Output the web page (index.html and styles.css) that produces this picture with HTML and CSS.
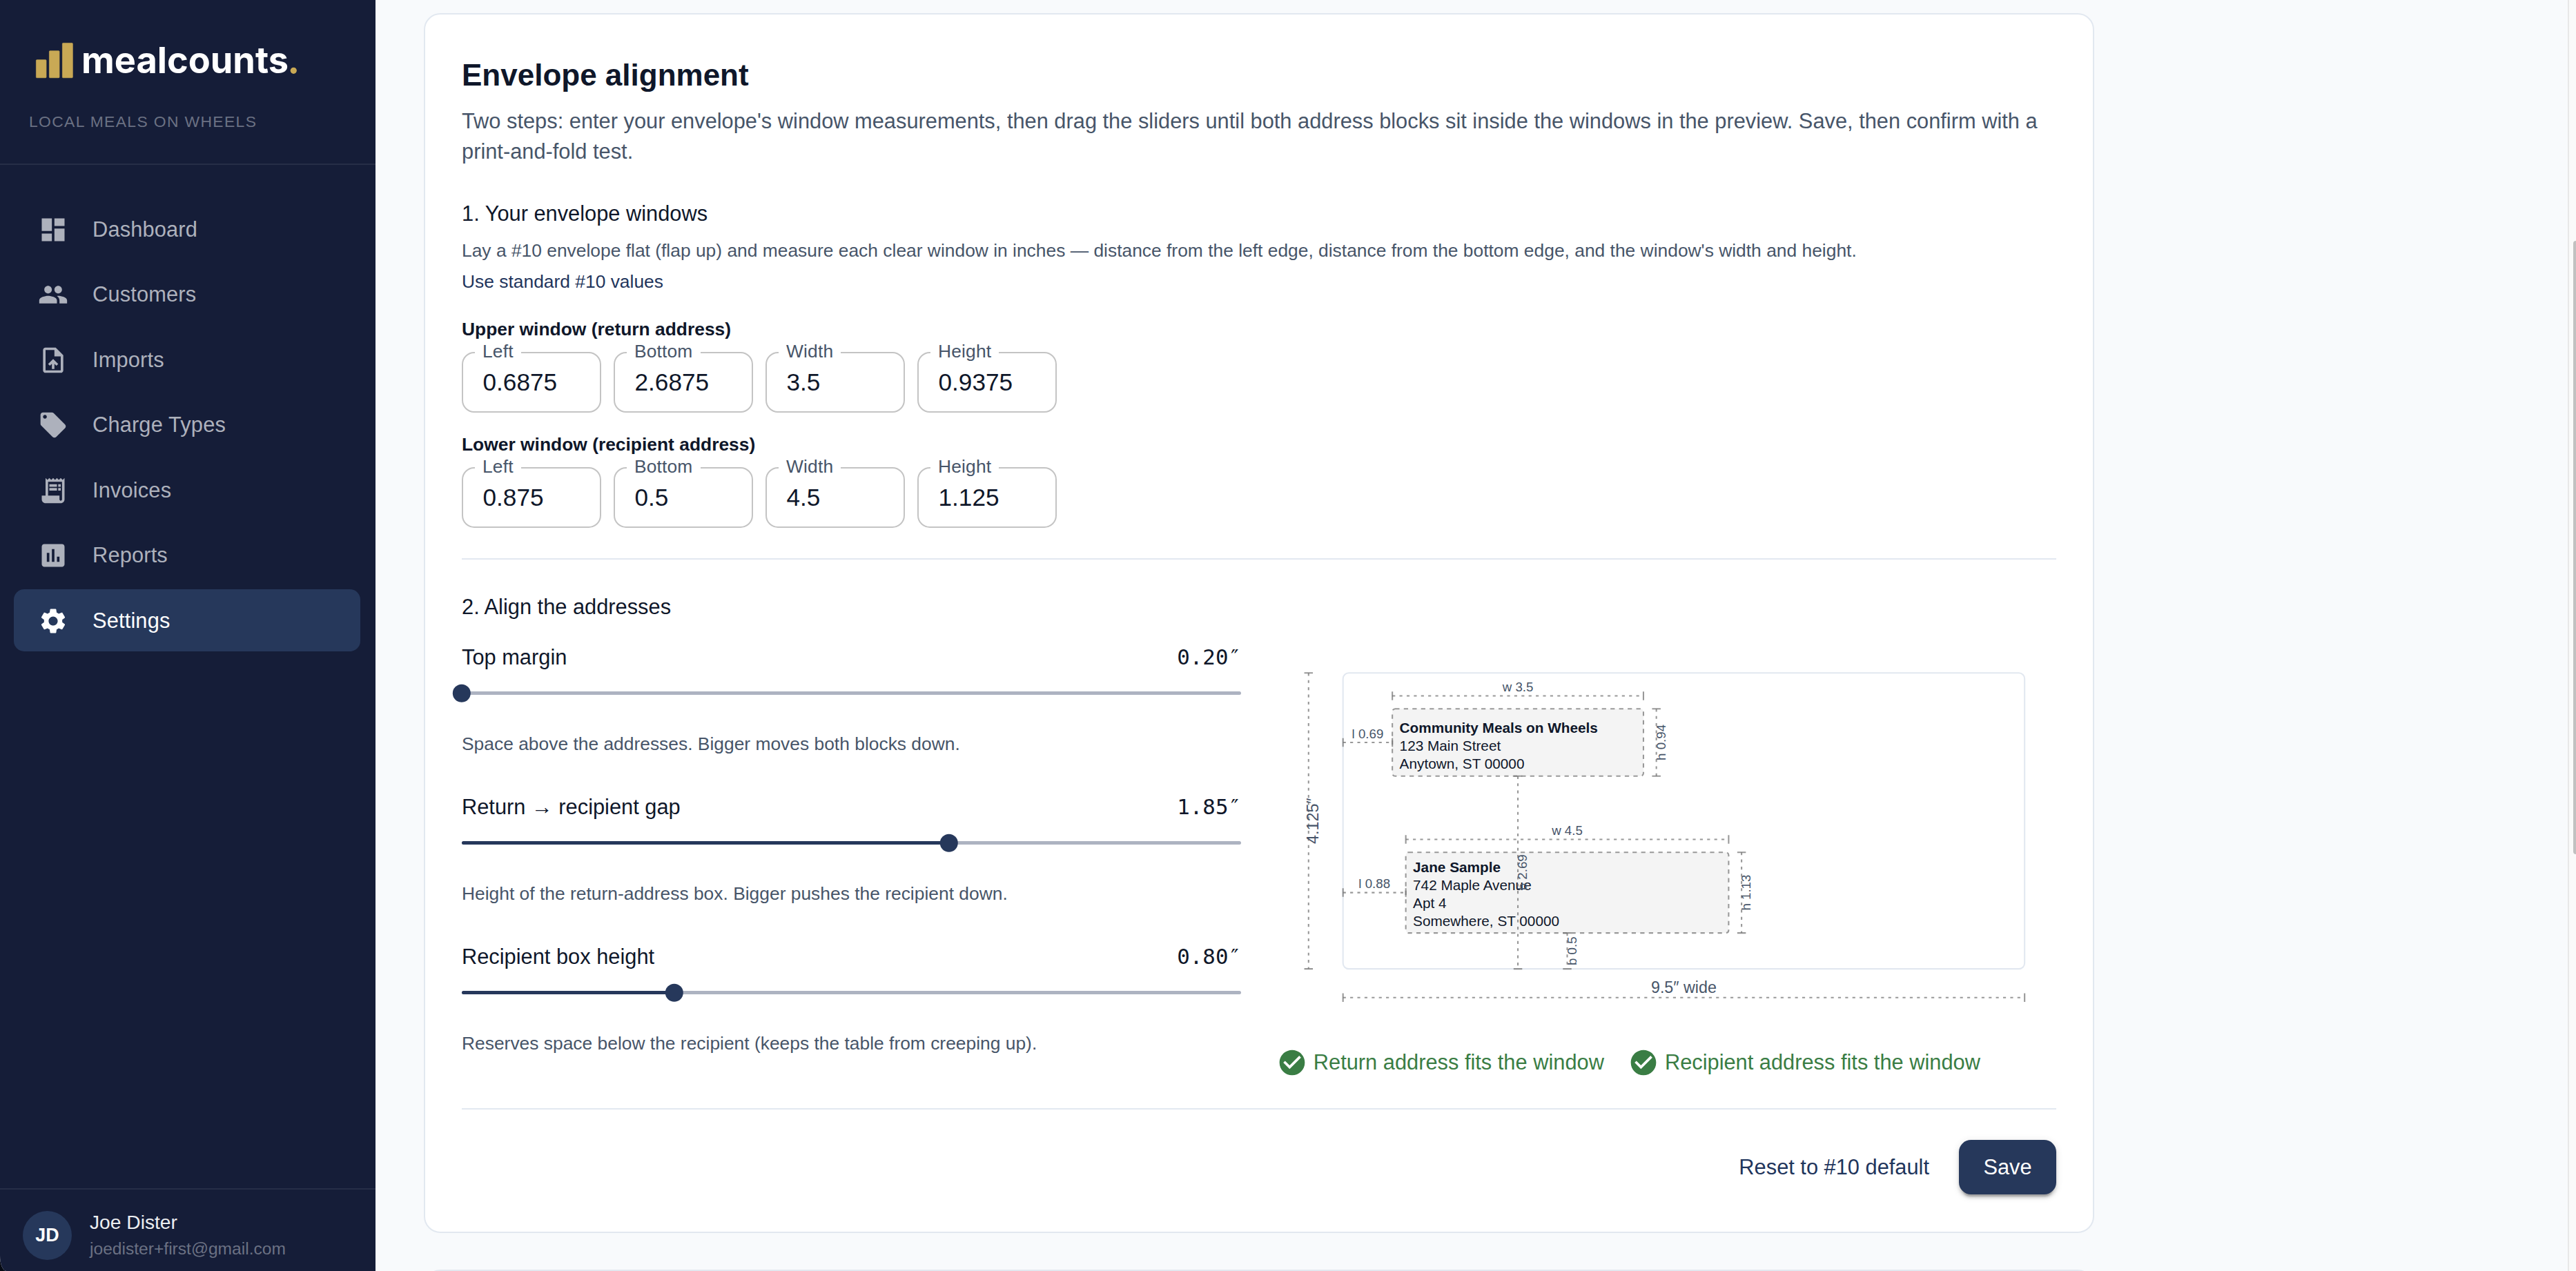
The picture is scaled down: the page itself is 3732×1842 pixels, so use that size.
FILE: index.html
```
<!DOCTYPE html>
<html lang="en">
  <head>
    <meta charset="UTF-8" />
    <meta name="viewport" content="width=device-width, initial-scale=1.0" />
    <title>mealcounts - Settings</title>
    <link rel="stylesheet" href="styles.css">
  </head>

  <body>
    <div class="app">
      <aside class="sidebar">
        <div class="brand">
          <svg class="logo" width="400" height="88" viewBox="0 0 400 88">
            <g class="logo-bars">
              <rect x="10.4" y="42.7" width="14.6" height="26" rx="1" />
              <rect x="29.4" y="29.7" width="14.6" height="39" rx="1" />
              <rect x="48.4" y="18.4" width="14.9" height="50.3" rx="1" />
            </g>
            <text class="logo-text" x="76" y="62.3">mealcounts</text>
            <circle class="logo-dot" cx="383.3" cy="58.3" r="4.6" />
          </svg>
          <p class="org">LOCAL MEALS ON WHEELS</p>
        </div>

        <nav class="nav">
          <a class="nav-item">
            <svg class="icon" viewBox="0 0 24 24"><path d="M3 13h8V3H3v10zm0 8h8v-6H3v6zm10 0h8V11h-8v10zm0-18v6h8V3h-8z" /></svg>
            Dashboard
          </a>
          <a class="nav-item">
            <svg class="icon" viewBox="0 0 24 24"><path d="M16 11c1.66 0 2.99-1.34 2.99-3S17.66 5 16 5c-1.66 0-3 1.34-3 3s1.34 3 3 3zm-8 0c1.66 0 2.99-1.34 2.99-3S9.66 5 8 5C6.34 5 5 6.34 5 8s1.34 3 3 3zm0 2c-2.33 0-7 1.17-7 3.5V19h14v-2.5c0-2.33-4.67-3.5-7-3.5zm8 0c-.29 0-.62.02-.97.05 1.16.84 1.97 1.97 1.97 3.45V19h6v-2.5c0-2.33-4.67-3.5-7-3.5z" /></svg>
            Customers
          </a>
          <a class="nav-item">
            <svg class="icon" viewBox="0 0 24 24"><path d="M14 2H6c-1.1 0-1.99.9-1.99 2L4 20c0 1.1.89 2 1.99 2H18c1.1 0 2-.9 2-2V8l-6-6zm4 18H6V4h7v5h5v11zM8 15.01l1.41 1.41L11 14.84V19h2v-4.16l1.59 1.59L16 15.01 12.01 11z" /></svg>
            Imports
          </a>
          <a class="nav-item">
            <svg class="icon" viewBox="0 0 24 24"><path d="M21.41 11.58l-9-9C12.05 2.22 11.55 2 11 2H4c-1.1 0-2 .9-2 2v7c0 .55.22 1.05.59 1.42l9 9c.36.36.86.58 1.41.58.55 0 1.05-.22 1.41-.59l7-7c.37-.36.59-.86.59-1.41 0-.55-.23-1.06-.59-1.42zM5.5 7C4.67 7 4 6.33 4 5.5S4.67 4 5.5 4 7 4.67 7 5.5 6.33 7 5.5 7z" /></svg>
            Charge Types
          </a>
          <a class="nav-item">
            <svg class="icon" viewBox="0 0 24 24"><path d="M19.5 3.5L18 2l-1.5 1.5L15 2l-1.5 1.5L12 2l-1.5 1.5L9 2 7.5 3.5 6 2v14H3v3c0 1.66 1.34 3 3 3h12c1.66 0 3-1.34 3-3V2l-1.5 1.5zM19 19c0 .55-.45 1-1 1s-1-.45-1-1v-3H8V5h11v14z" /><path d="M9 7h6v2H9zm7 0h2v2h-2zm-7 3h6v2H9zm7 0h2v2h-2z" /></svg>
            Invoices
          </a>
          <a class="nav-item">
            <svg class="icon" viewBox="0 0 24 24"><path d="M19 3H5c-1.1 0-2 .9-2 2v14c0 1.1.9 2 2 2h14c1.1 0 2-.9 2-2V5c0-1.1-.9-2-2-2zM9 17H7v-7h2v7zm4 0h-2V7h2v10zm4 0h-2v-4h2v4z" /></svg>
            Reports
          </a>
          <a class="nav-item active">
            <svg class="icon" viewBox="0 0 24 24"><path d="M19.14 12.94c.04-.3.06-.61.06-.94 0-.32-.02-.64-.07-.94l2.03-1.58c.18-.14.23-.41.12-.61l-1.92-3.32c-.12-.22-.37-.29-.59-.22l-2.39.96c-.5-.38-1.03-.7-1.62-.94l-.36-2.54c-.04-.24-.24-.41-.48-.41h-3.84c-.24 0-.43.17-.47.41l-.36 2.54c-.59.24-1.13.57-1.62.94l-2.39-.96c-.22-.08-.47 0-.59.22L2.74 8.87c-.12.21-.08.47.12.61l2.03 1.58c-.05.3-.09.63-.09.94s.02.64.07.94l-2.03 1.58c-.18.14-.23.41-.12.61l1.92 3.32c.12.22.37.29.59.22l2.39-.96c.5.38 1.03.7 1.62.94l.36 2.54c.05.24.24.41.48.41h3.84c.24 0 .44-.17.47-.41l.36-2.54c.59-.24 1.13-.56 1.62-.94l2.39.96c.22.08.47 0 .59-.22l1.92-3.32c.12-.22.07-.47-.12-.61l-2.01-1.58zM12 15.6c-1.98 0-3.6-1.62-3.6-3.6s1.62-3.6 3.6-3.6 3.6 1.62 3.6 3.6-1.62 3.6-3.6 3.6z" /></svg>
            Settings
          </a>
        </nav>

        <div class="user">
          <div class="avatar">JD</div>
          <div>
            <p class="user-name">Joe Dister</p>
            <p class="user-email">joedister+first@gmail.com</p>
          </div>
        </div>
      </aside>

      <main class="main">
        <section class="card">
          <h2 class="title">Envelope alignment</h2>
          <p class="lead">Two steps: enter your envelope's window measurements, then drag the sliders until both address blocks sit inside the windows in the preview. Save, then confirm with a print-and-fold test.</p>

          <h3 class="step">1. Your envelope windows</h3>
          <p class="hint step-hint">Lay a #10 envelope flat (flap up) and measure each clear window in inches — distance from the left edge, distance from the bottom edge, and the window's width and height.</p>
          <a class="hint link">Use standard #10 values</a>

          <h4 class="group">Upper window (return address)</h4>
          <div class="fields">
            <div class="field"><label>Left</label>0.6875</div>
            <div class="field"><label>Bottom</label>2.6875</div>
            <div class="field"><label>Width</label>3.5</div>
            <div class="field"><label>Height</label>0.9375</div>
          </div>
          <h4 class="group">Lower window (recipient address)</h4>
          <div class="fields">
            <div class="field"><label>Left</label>0.875</div>
            <div class="field"><label>Bottom</label>0.5</div>
            <div class="field"><label>Width</label>4.5</div>
            <div class="field"><label>Height</label>1.125</div>
          </div>

          <hr class="divider">

          <h3 class="step align-step">2. Align the addresses</h3>
          <div class="align">
            <div class="sliders">
              <div>
                <div class="slider-head"><span>Top margin</span><span class="value">0.20″</span></div>
                <div class="slider"><div class="slider-fill" style="width: 0%"></div><div class="thumb" style="left: 0%"></div></div>
                <p class="hint">Space above the addresses. Bigger moves both blocks down.</p>
              </div>
              <div>
                <div class="slider-head"><span>Return → recipient gap</span><span class="value">1.85″</span></div>
                <div class="slider"><div class="slider-fill" style="width: 62.5%"></div><div class="thumb" style="left: 62.5%"></div></div>
                <p class="hint">Height of the return-address box. Bigger pushes the recipient down.</p>
              </div>
              <div>
                <div class="slider-head"><span>Recipient box height</span><span class="value">0.80″</span></div>
                <div class="slider"><div class="slider-fill" style="width: 27.27%"></div><div class="thumb" style="left: 27.27%"></div></div>
                <p class="hint">Reserves space below the recipient (keeps the table from creeping up).</p>
              </div>
            </div>

            <div class="preview">
              <!-- 50 units per inch -->
              <svg class="envelope" viewBox="-46 -21.8 543.5 270">
                <rect class="paper" x="0" y="0" width="475" height="206.25" rx="4" />
                <rect class="window" x="34.375" y="25" width="175" height="46.875" rx="2" />
                <rect class="window" x="43.75" y="125" width="225" height="56.25" rx="2" />

                <g class="address">
                  <text class="strong" x="39.4" y="41.5">Community Meals on Wheels</text>
                  <text x="39.4" y="54">123 Main Street</text>
                  <text x="39.4" y="66.5">Anytown, ST 00000</text>
                  <text class="strong" x="48.75" y="139">Jane Sample</text>
                  <text x="48.75" y="151.5">742 Maple Avenue</text>
                  <text x="48.75" y="164">Apt 4</text>
                  <text x="48.75" y="176.5">Somewhere, ST 00000</text>
                </g>

                <!-- overall size -->
                <path class="dim" d="M-24 0V206.25M0 226.25H475" />
                <path class="cap" d="M-27 0h6M-27 206.25h6M0 223.25v6M475 223.25v6" />
                <!-- upper window -->
                <path class="dim" d="M34.375 16H209.375M0 48.4H34.375M218.375 25V71.875M121.875 71.875V206.25" />
                <path class="cap" d="M34.375 13v6M209.375 13v6M0 45.4v6M34.375 45.4v6M215.375 25h6M215.375 71.875h6M118.875 71.875h6M118.875 206.25h6" />
                <!-- lower window -->
                <path class="dim" d="M43.75 116H268.75M0 153.1H43.75M277.75 125V181.25M156.25 181.25V206.25" />
                <path class="cap" d="M43.75 113v6M268.75 113v6M0 150.1v6M43.75 150.1v6M274.75 125h6M274.75 181.25h6M153.25 181.25h6M153.25 206.25h6" />

                <g class="dim-text">
                  <text x="121.9" y="13">w 3.5</text>
                  <text x="17.2" y="45.4">l 0.69</text>
                  <text transform="translate(224.7 48.4) rotate(-90)">h 0.94</text>
                  <text transform="translate(128.2 139) rotate(-90)">b 2.69</text>
                  <text x="156.25" y="113">w 4.5</text>
                  <text x="21.9" y="150.1">l 0.88</text>
                  <text transform="translate(284.1 153.1) rotate(-90)">h 1.13</text>
                  <text transform="translate(162.6 193.8) rotate(-90)">b 0.5</text>
                  <text class="big" transform="translate(-17.1 103.1) rotate(-90)">4.125″</text>
                  <text class="big" x="237.5" y="223.1">9.5″ wide</text>
                </g>
              </svg>

              <div class="checks">
                <div class="check">
                  <svg class="icon" viewBox="0 0 24 24"><path d="M12 2C6.48 2 2 6.48 2 12s4.48 10 10 10 10-4.48 10-10S17.52 2 12 2zm-2 15l-5-5 1.41-1.41L10 14.17l7.59-7.59L19 8l-9 9z" /></svg>
                  Return address fits the window
                </div>
                <div class="check">
                  <svg class="icon" viewBox="0 0 24 24"><path d="M12 2C6.48 2 2 6.48 2 12s4.48 10 10 10 10-4.48 10-10S17.52 2 12 2zm-2 15l-5-5 1.41-1.41L10 14.17l7.59-7.59L19 8l-9 9z" /></svg>
                  Recipient address fits the window
                </div>
              </div>
            </div>
          </div>

          <hr class="divider">

          <div class="actions">
            <a class="btn-text">Reset to #10 default</a>
            <a class="btn">Save</a>
          </div>
        </section>

        <section class="card next-card"></section>
      </main>

      <div class="scrollbar"><div class="scroll-thumb"></div></div>
    </div>
  </body>
</html>
```
FILE: styles.css
```
* {
  margin: 0;
  padding: 0;
  box-sizing: border-box;
}
body {
  height: 1842px;
  overflow: hidden;
  background: #060b14;
  color: #0f172a;
  font-family: "Liberation Sans", Arial, sans-serif;
  font-size: 30.8px;
  line-height: 44px;
}
.app {
  display: flex;
  height: 1842px;
  overflow: hidden;
  background: #f8fafc;
  border-bottom-left-radius: 9px 22px;
}
.icon {
  flex: none;
  width: 44px;
  height: 44px;
  fill: currentColor;
}

/* sidebar */
.sidebar {
  display: flex;
  flex: none;
  flex-direction: column;
  width: 544px;
  background: #151d38;
}
.brand {
  height: 239px;
  padding: 44px 42px 0;
  border-bottom: 2px solid #262e47;
}
.logo {
  display: block;
}
.logo-bars {
  fill: #c9a955;
  stroke: #bd9f52;
  stroke-width: 0.8;
}
.logo-text {
  fill: #fff;
  font-family: Inter, sans-serif;
  font-size: 52.3px;
  font-weight: 700;
}
.logo-dot {
  fill: #c9a955;
}
.org {
  margin-top: 25px;
  color: #6b7183;
  font-size: 22.9px;
  line-height: 38px;
  letter-spacing: 1.35px;
}
.nav {
  display: flex;
  flex-direction: column;
  gap: 4.5px;
  padding: 48px 22px 0 20px;
}
.nav-item {
  display: flex;
  align-items: center;
  gap: 35px;
  height: 90px;
  padding: 1px 0 0 35px;
  border-radius: 15px;
  color: #adb1bc;
  letter-spacing: 0.15px;
}
.nav-item.active {
  background: #26385b;
  color: #fff;
}
.user {
  display: flex;
  gap: 26px;
  height: 120px;
  margin-top: auto;
  padding: 28px 33px 0;
  border-top: 2px solid #262e47;
}
.avatar {
  flex: none;
  width: 71px;
  height: 71px;
  margin-top: 3px;
  border-radius: 50%;
  background: #26385b;
  color: #fff;
  font-size: 26.8px;
  font-weight: 700;
  line-height: 71px;
  text-align: center;
}
.user-name {
  color: #eceef1;
  font-size: 28.2px;
  line-height: 39px;
}
.user-email {
  color: #6b7183;
  font-size: 24.6px;
  line-height: 38px;
}

/* content */
.main {
  flex: 1;
  padding: 19px 0 0 70px;
}
.card {
  width: 2420px;
  height: 1768px;
  padding: 53px;
  border: 2px solid #e2e8f0;
  border-radius: 24px;
  background: #fff;
}
.next-card {
  height: 300px;
  margin-top: 53px;
}
.title {
  font-size: 44px;
  line-height: 70.4px;
}
.lead {
  margin-top: 10px;
  color: #475569;
}
.step {
  margin-top: 44px;
  font-size: 30.8px;
  font-weight: 400;
  line-height: 48.4px;
}
.hint {
  color: #475569;
  font-size: 26.4px;
  line-height: 43.8px;
}
.step-hint {
  margin-top: 7px;
}
.link {
  display: block;
  margin-top: 1px;
  color: #1f355c;
}
.group {
  margin: 26px 0 10px;
  font-size: 26.4px;
  line-height: 43.8px;
}
.fields + .group {
  margin-top: 25px;
}
.fields {
  display: flex;
  gap: 18px;
}
.field {
  position: relative;
  width: 202px;
  height: 88px;
  padding-left: 28.5px;
  border: 2px solid #c4c4c4;
  border-radius: 18px;
  font-size: 35.2px;
  line-height: 83px;
}
.field label {
  position: absolute;
  top: -15px;
  left: 17px;
  padding: 0 11px;
  background: #fff;
  color: #475569;
  font-size: 26.4px;
  line-height: 24px;
  letter-spacing: 0.15px;
}
.divider {
  height: 2px;
  margin-top: 44px;
  border: 0;
  background: #e2e8f0;
}

/* sliders */
.align-step {
  margin: 45px 0 26px;
}
.align {
  display: flex;
  gap: 52px;
  height: 631.7px;
}
.sliders {
  display: flex;
  flex: none;
  flex-direction: column;
  gap: 46.8px;
  width: 1129px;
}
.slider-head {
  display: flex;
  align-items: baseline;
  justify-content: space-between;
  height: 44px;
}
.value {
  font-family: "DejaVu Sans Mono", monospace;
}
.slider {
  position: relative;
  height: 4.4px;
  margin: 28px 0 50px;
  border-radius: 3px;
  background: #adb3c1;
}
.slider-fill {
  height: 100%;
  border-radius: 3px;
  background: #26385b;
}
.thumb {
  position: absolute;
  top: 50%;
  width: 26.4px;
  height: 26.4px;
  border-radius: 50%;
  background: #26385b;
  transform: translate(-50%, -50%);
}

/* envelope preview */
.preview {
  flex: none;
  width: 1130px;
}
.envelope {
  display: block;
  width: 1130px;
  height: 561.3px;
}
.paper {
  fill: #fff;
  stroke: #e2e8f0;
}
.window {
  fill: #f4f4f4;
  stroke: #999;
  stroke-dasharray: 3 3;
}
.dim,
.cap {
  fill: none;
  stroke: #757575;
  stroke-opacity: 0.75;
}
.dim {
  stroke-dasharray: 2 3;
}
.address {
  fill: #0f172a;
  font-size: 10px;
}
.strong {
  font-weight: 700;
}
.dim-text {
  fill: #475569;
  font-size: 9px;
  text-anchor: middle;
}
.big {
  font-size: 11.2px;
}
.checks {
  display: flex;
  gap: 35.2px;
  margin-top: 26.4px;
}
.check {
  display: flex;
  gap: 8.8px;
  color: #3a7d44;
}

/* footer buttons */
.actions {
  display: flex;
  align-items: center;
  justify-content: flex-end;
  gap: 43px;
  margin-top: 44px;
}
.btn-text {
  color: #1f355c;
}
.btn {
  padding: 0 35.4px;
  border-radius: 17.6px;
  background: #26385b;
  box-shadow: 0 6.6px 2.2px -4.4px rgba(0, 0, 0, 0.2), 0 4.4px 4.4px rgba(0, 0, 0, 0.14), 0 2.2px 11px rgba(0, 0, 0, 0.12);
  color: #fff;
  line-height: 79px;
}

/* page scrollbar, cut off by the window edge */
.scrollbar {
  flex: none;
  width: 12px;
  padding: 349px 0 0 6px;
  border-left: 2px solid #e8e8e8;
  background: #fafafa;
}
.scroll-thumb {
  height: 889px;
  border-radius: 4px 0 0 4px;
  background: #c1c1c1;
}
```
